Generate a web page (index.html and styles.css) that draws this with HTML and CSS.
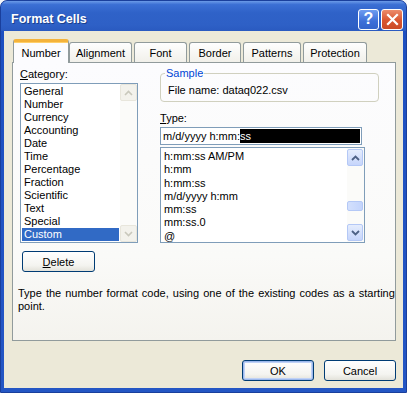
FILE: index.html
```html
<!DOCTYPE html>
<html>
<head>
<meta charset="utf-8">
<link rel="stylesheet" href="styles.css">
</head>
<body>
<div class="win">
  <div class="title">
    <span class="ttext">Format Cells</span>
    <div class="tbtns">
      <div class="tb help">?</div>
      <div class="tb close"><svg width="13" height="13" viewBox="0 0 13 13"><path d="M2 2 L11 11 M11 2 L2 11" stroke="#fff" stroke-width="2.2" stroke-linecap="square"/></svg></div>
    </div>
  </div>
  <div class="frame">
    <div class="tabs">
      <div class="tab sel t1">Number</div>
      <div class="tab t2">Alignment</div>
      <div class="tab t3">Font</div>
      <div class="tab t4">Border</div>
      <div class="tab t5">Patterns</div>
      <div class="tab t6">Protection</div>
    </div>
    <div class="panel">
      <div class="left">
        <div class="lbl"><u>C</u>ategory:</div>
        <div class="list cat">
          <div class="items">
            <div class="it">General</div>
            <div class="it">Number</div>
            <div class="it">Currency</div>
            <div class="it">Accounting</div>
            <div class="it">Date</div>
            <div class="it">Time</div>
            <div class="it">Percentage</div>
            <div class="it">Fraction</div>
            <div class="it">Scientific</div>
            <div class="it">Text</div>
            <div class="it">Special</div>
            <div class="it on">Custom</div>
          </div>
          <div class="sb dis">
            <div class="arr"><svg width="9" height="6" viewBox="0 0 9 6"><path d="M1 5 L4.5 1.5 L8 5" fill="none" stroke="#c9c8bc" stroke-width="1.6"/></svg></div>
            <div class="track"></div>
            <div class="arr"><svg width="9" height="6" viewBox="0 0 9 6"><path d="M1 1 L4.5 4.5 L8 1" fill="none" stroke="#c9c8bc" stroke-width="1.6"/></svg></div>
          </div>
        </div>
        <button class="btn del"><u>D</u>elete</button>
      </div>
      <div class="right">
        <fieldset class="sample"><legend>Sample</legend>File name: dataq022.csv</fieldset>
        <div class="lbl tlbl"><u>T</u>ype:</div>
        <div class="input">m/d/yyyy h:mm:<span class="hl">ss</span></div>
        <div class="list typ">
          <div class="items">
            <div class="it">h:mm:ss AM/PM</div>
            <div class="it">h:mm</div>
            <div class="it">h:mm:ss</div>
            <div class="it">m/d/yyyy h:mm</div>
            <div class="it">mm:ss</div>
            <div class="it">mm:ss.0</div>
            <div class="it">@</div>
          </div>
          <div class="sb">
            <div class="arr"><svg width="9" height="6" viewBox="0 0 9 6"><path d="M1 5 L4.5 1.5 L8 5" fill="none" stroke="#4d6185" stroke-width="1.8"/></svg></div>
            <div class="track"><div class="thumb"></div></div>
            <div class="arr"><svg width="9" height="6" viewBox="0 0 9 6"><path d="M1 1 L4.5 4.5 L8 1" fill="none" stroke="#4d6185" stroke-width="1.8"/></svg></div>
          </div>
        </div>
      </div>
      <div class="desc">Type the number format code, using one of the existing codes as a starting<br>point.</div>
    </div>
    <div class="btnrow">
      <button class="btn ok">OK</button>
      <button class="btn">Cancel</button>
    </div>
  </div>
</div>
</body>
</html>
```

FILE: styles.css
```css
* { box-sizing: border-box; }
html, body { margin: 0; padding: 0; background: #f4f6fa; }
body { font-family: "Liberation Sans", Arial, sans-serif; font-size: 11px; color: #000; }

.win {
  width: 407px; height: 393px;
  display: flex; flex-direction: column;
  background: linear-gradient(#1d4fc0, #2456c4);
  border-radius: 7px 7px 0 0;
  border: 1px solid #1a3f9c;
}
.title {
  height: 30px; flex: none;
  display: flex; align-items: center; justify-content: space-between;
  padding: 6px 3px 0 10px;
  background: linear-gradient(#6c9be8 0%, #3b6fd4 12%, #2f62c8 40%, #2e60c6 80%, #2a5ac0 100%);
  border-radius: 6px 6px 0 0;
}
.ttext { color: #fff; font-weight: bold; font-size: 12.5px; text-shadow: 1px 1px 0 #1a3f8c; }
.tbtns { display: flex; gap: 2px; }
.tb {
  width: 21px; height: 21px; border: 1px solid #fff; border-radius: 3px;
  display: flex; align-items: center; justify-content: center;
  color: #fff; font-weight: bold; font-size: 16px;
}
.help { background: linear-gradient(#6f9cf0, #3d6fd8 60%, #3465cc); }
.close { width: 22px; background: linear-gradient(#ec8c6c, #d9552f 55%, #cb4a26); }

.frame {
  flex: 1;
  margin: 0 3px 4px 3px;
  background: #ece9d8;
  padding: 8px 7px 0 8px;
  display: flex; flex-direction: column;
}
.tabs { display: flex; align-items: flex-end; height: 23px; }
.tab {
  height: 20px;
  border: 1px solid #919b9c; border-bottom: none;
  border-radius: 3px 3px 0 0;
  background: linear-gradient(#fefefe, #f1f0ea);
  display: flex; align-items: center; justify-content: center;
  font-size: 11px; padding-top: 1px;
}
.tab.sel {
  height: 24px; margin-bottom: -1px;
  position: relative; z-index: 1;
  background: #fcfcfe;
  border-top: 3px solid #f4b33b;
  box-shadow: inset 0 1px 0 #ffcf6a;
  padding-top: 0;
}
.t1 { margin-left: 1px; width: 56px; }
.t2 { width: 63px; }
.t3 { margin-left: 2px; width: 53px; }
.t4 { margin-left: 2px; width: 52px; }
.t5 { margin-left: 2px; width: 58px; }
.t6 { margin-left: 2px; width: 64px; }

.panel {
  height: 279px;
  border: 1px solid #919b9c;
  background: linear-gradient(#fcfcfe 0%, #fafaf8 70%, #f4f3ee 100%);
  padding: 4px 0 0 7px;
  display: grid;
  grid-template-columns: 118px 1fr;
  column-gap: 22px;
  align-content: start;
}
.lbl { line-height: 14px; font-size: 11px; }
.list {
  border: 1px solid #7f9db9; background: #fff;
  display: flex;
}
.cat { margin-top: 2px; height: 160px; }
.items { flex: 1; padding: 1px 1px 0 1px; }
.it { line-height: 13px; height: 13px; padding-left: 2px; font-size: 11px; white-space: nowrap; }
.it.on { background: #316ac5; color: #fff; }
.sb { width: 17px; display: flex; flex-direction: column; background: #fbfbf9; }
.arr {
  height: 17px; flex: none;
  display: flex; align-items: center; justify-content: center;
  border: 1px solid #b4c8f6; border-radius: 2px;
  background: linear-gradient(#e5edfd, #c6d5fb);
}
.sb.dis .arr { border-color: #e8e6dc; background: #f3f2ec; }
.track { flex: 1; display: flex; flex-direction: column; justify-content: flex-end; padding-bottom: 13px; }
.thumb {
  height: 10px; border: 1px solid #b4c8f6; border-radius: 2px;
  background: linear-gradient(90deg, #d3e0fd, #c3d4fc);
}
.btn {
  font-family: inherit; font-size: 11px; color: #000;
  border: 1px solid #003c74; border-radius: 3px;
  background: linear-gradient(#ffffff, #f4f4f0 70%, #e3e2da);
  padding: 0;
}
.del { margin: 8px 0 0 2px; width: 73px; height: 21px; }

.sample {
  margin: 0; width: 219px;
  border: 1px solid #d0d0bf; border-radius: 4px;
  padding: 4px 8px 4px 7px;
  line-height: 14px; font-size: 11px;
}
.sample legend { color: #0046d5; padding: 0 1px; line-height: 12px; margin-left: -3px; }
.tlbl { margin-top: 9px; }
.input {
  margin-top: 2px; width: 202px; height: 18px;
  border: 1px solid #7f9db9; background: #fff;
  display: flex; align-items: center;
  padding: 0 1px 0 2px; font-size: 11px; white-space: nowrap;
}
.hl { flex: 1; background: #000; color: #fff; line-height: 14px; }
.typ { margin-top: 2px; width: 205px; height: 96px; }
.typ .items { padding-top: 2px; }
.typ .it { height: 13.3px; line-height: 13.3px; }
.typ .sb { padding: 1px 1px 1px 0; }

.desc {
  grid-column: 1 / 3;
  margin: 15px 0 0 -2px;
  line-height: 13px; font-size: 11px; white-space: nowrap; word-spacing: 1px;
}
.btnrow { display: flex; justify-content: flex-end; gap: 10px; margin-top: 19px; }
.btnrow .btn { width: 72px; height: 21px; }
.btn.ok { box-shadow: inset 0 0 0 1px #9cb8ec, inset 0 0 0 2px #c0d2f6; }
```
